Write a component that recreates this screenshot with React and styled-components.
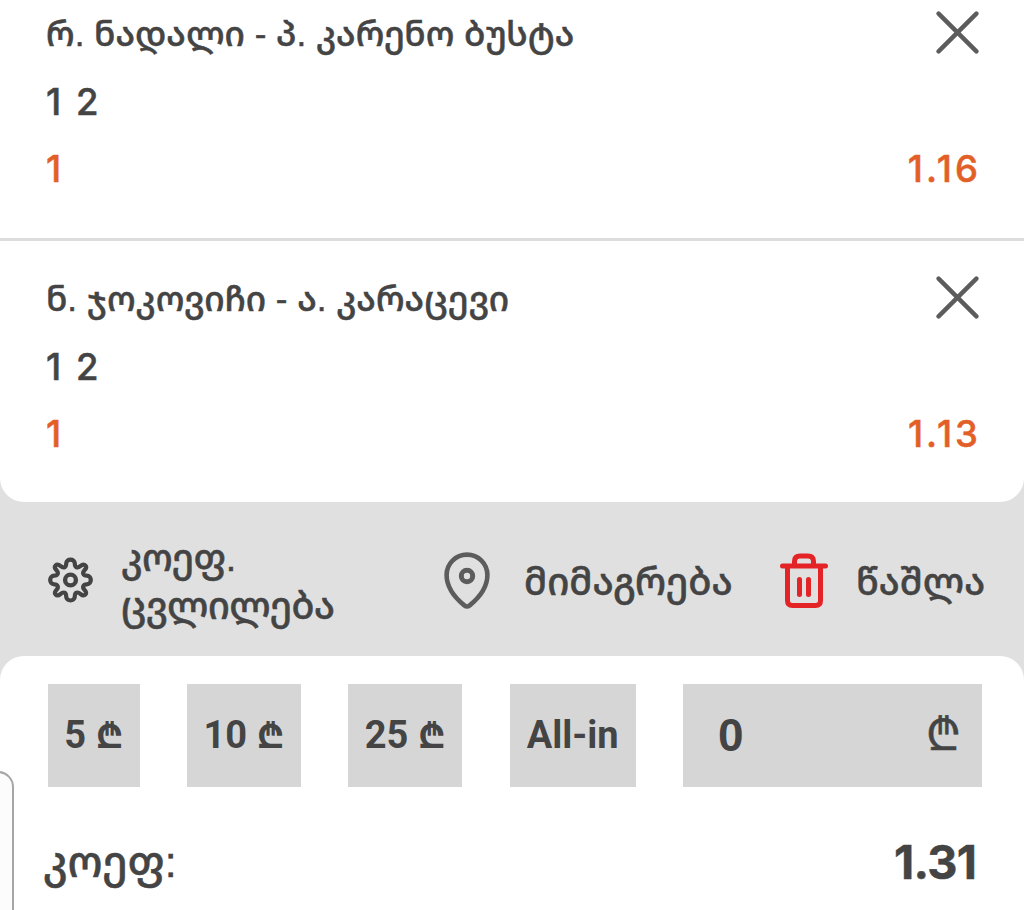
import React, { useState } from 'react';
import styled, { createGlobalStyle, ThemeProvider } from 'styled-components';

const theme = {
  text: '#444444',
  icon: '#5c5c5c',
  accent: '#e35f28',
  danger: '#e32326',
  bar: '#e0e0e0',
  field: '#d6d6d6',
  line: '#dddddd',
};

const GlobalStyle = createGlobalStyle`
  * { box-sizing: border-box; }
  body {
    margin: 0;
    background: ${theme.bar};
    color: ${theme.text};
    font-family: "Liberation Sans", "Noto Sans Georgian", "DejaVu Sans", sans-serif;
    overflow: hidden;
  }
  button, input {
    border: 0;
    padding: 0;
    background: none;
    color: inherit;
    font: inherit;
  }
`;

const Slip = styled.main`
  width: 1024px;
  height: 910px;
  display: flex;
  flex-direction: column;
  overflow: hidden;
`;

const Picks = styled.section`
  height: 502px;
  background: #fff;
  border-radius: 0 0 24px 24px;
`;

const Pick = styled.article`
  height: ${(props) => (props.$first ? 241 : 261)}px;
  padding: ${(props) => (props.$first ? 0 : 24)}px 45px 0 46px;
  border-bottom: ${(props) => (props.$first ? `3px solid ${props.theme.line}` : '0')};
`;

const Line = styled.div`
  height: 67.5px;
  display: flex;
  align-items: center;
  justify-content: space-between;
  color: ${(props) => (props.$accent ? props.theme.accent : 'inherit')};
`;

const Text = styled.span`
  font-size: ${(props) => props.$size || 35}px;
  letter-spacing: ${(props) => props.$spacing || 0}px;
  line-height: 48px;
  font-weight: 500;
  white-space: nowrap;
  -webkit-text-stroke: 0.5px currentColor;
`;

const Figure = styled(Text)`
  padding-top: 1px;
  margin-right: ${(props) => -(props.$spacing || 0) + 1}px;
  font-family: Inter, sans-serif;
  font-weight: ${(props) => (props.$bold ? 700 : 500)};
`;

const CloseButton = styled.button`
  display: flex;
  margin-bottom: 2px;
`;

const Actions = styled.nav`
  height: 153.5px;
  display: grid;
  grid-template-columns: 396px 336px 1fr;
  align-items: center;
  padding: 3px 0 0 48px;
`;

const Action = styled.button`
  display: flex;
  align-items: center;
  gap: ${(props) => props.$gap}px;
  text-align: left;
`;

const ActionLabel = styled(Text)`
  padding-top: 4px;
`;

const Stake = styled.section`
  flex: 1;
  position: relative;
  padding: 28.5px 42px 0 48px;
  background: #fff;
  border-radius: 24px 24px 0 0;
`;

const Amounts = styled.div`
  height: 102.5px;
  display: grid;
  grid-template-columns: 92px 113.5px 114px 126px 299px;
  column-gap: 47.4px;
`;

const Chip = styled.button`
  background: ${(props) => props.theme.field};
  font: 700 38px/100px Roboto, sans-serif;
  white-space: nowrap;
`;

const ChipSign = styled.span`
  font-family: Inter, sans-serif;
  font-size: 37px;
`;

const Field = styled.label`
  display: flex;
  align-items: center;
  justify-content: space-between;
  padding: 0 21px 0 35px;
  background: ${(props) => props.theme.field};
  font-size: 46px;
`;

const AmountInput = styled.input`
  width: 120px;
  font-weight: 700;
  outline: 0;
`;

const FieldSign = styled.span`
  font: 400 45px/48px "DejaVu Sans Condensed", "DejaVu Sans", sans-serif;
  -webkit-text-stroke: 0.5px currentColor;
`;

const Total = styled.div`
  height: 80px;
  margin: 35px 4px 0 -5px;
  display: flex;
  align-items: center;
  justify-content: space-between;
`;

// edge of the side sheet resting over the slip
const SideSheet = styled.aside`
  position: absolute;
  left: -30px;
  bottom: -20px;
  width: 44px;
  height: 159px;
  background: #fcfcfc;
  border: 2px solid #a6a6a6;
  border-radius: 16px;
`;

const CloseIcon = () => (
  <svg width="43" height="43" viewBox="0 0 43 43" fill="none" stroke={theme.icon} strokeWidth="4.4" strokeLinecap="round">
    <path d="M2.6 2.6 40.4 40.4M40.4 2.6 2.6 40.4" />
  </svg>
);

const GearIcon = () => (
  <svg width="45" height="46" viewBox="0 0 45 46" fill="none" stroke={theme.text} strokeWidth="4.2" strokeLinejoin="round">
    <path d="M18.2 6.5C18.2 1.2 26.8 1.2 26.8 6.5C26.8 10.5 29.5 11.6 32.3 9.2C36.5 5.5 40.3 9.3 36.4 13.3C34 16 35.2 18.7 38.7 18.7C44.200 18.7 44.200 27.3 38.7 27.3C35.2 27.3 34 30 36.4 32.7C40.3 36.7 36.5 40.5 32.3 36.8C29.5 34.4 26.8 35.5 26.8 39.5C26.8 44.8 18.2 44.8 18.2 39.5C18.2 35.5 15.5 34.4 12.7 36.8C8.5 40.5 4.7 36.7 8.600 32.7C11 30 9.800 27.3 6.300 27.3C.8 27.3 .8 18.7 6.300 18.7C9.800 18.7 11 16 8.600 13.3C4.700 9.300 8.500 5.500 12.7 9.200C15.500 11.600 18.2 10.500 18.2 6.500Z" />
    <circle cx="22.5" cy="23" r="5.4" strokeWidth="4.4" />
  </svg>
);

const PinIcon = () => (
  <svg width="46" height="57" viewBox="0 0 46 57" fill="none" stroke={theme.icon} strokeWidth="4.6" strokeLinejoin="round">
    <path d="M23 2.6C11.6 2.6 2.6 11.6 2.6 23C2.6 36.5 12.5 47 20.3 53.4Q23 55.6 25.7 53.4C33.5 47 43.4 36.5 43.4 23C43.4 11.6 34.4 2.6 23 2.6Z" />
    <circle cx="23" cy="24" r="5.7" strokeWidth="5" />
  </svg>
);

const TrashIcon = () => (
  <svg width="48" height="57" viewBox="0 0 48 57" fill="none" stroke={theme.danger} strokeWidth="5" strokeLinecap="round" strokeLinejoin="round">
    <path d="M2.5 14H45.5M7.5 14V48.500Q7.5 53.500 12.5 53.500H35.5Q40.5 53.500 40.5 48.500V14M14.5 13V9.500Q14.5 4 20 4H28Q33.5 4 33.5 9.500V13M19.5 27.500V42.500M28.5 27.500V42.500" />
  </svg>
);

const picks = [
  { match: 'რ. ნადალი - პ. კარენო ბუსტა', odds: '1.16' },
  { match: 'ნ. ჯოკოვიჩი - ა. კარაცევი', odds: '1.13' },
];

const amounts = [5, 10, 25];

const App = () => {
  const [amount, setAmount] = useState('0');
  return (
    <ThemeProvider theme={theme}>
      <GlobalStyle />
      <Slip>
        <Picks>
          {picks.map((pick, i) => (
            <Pick key={pick.match} $first={i === 0}>
              <Line>
                <Text>{pick.match}</Text>
                <CloseButton aria-label="Close"><CloseIcon /></CloseButton>
              </Line>
              <Line><Figure $size={36.5} $spacing={2.5}>1 2</Figure></Line>
              <Line $accent>
                <Figure $size={36.5}>1</Figure>
                <Figure $size={36.5} $spacing={3}>{pick.odds}</Figure>
              </Line>
            </Pick>
          ))}
        </Picks>
        <Actions>
          <Action $gap={28}>
            <GearIcon />
            <ActionLabel $size={37.5} $spacing={-0.5}>კოეფ.<br />ცვლილება</ActionLabel>
          </Action>
          <Action $gap={34}>
            <PinIcon />
            <ActionLabel $size={38}>მიმაგრება</ActionLabel>
          </Action>
          <Action $gap={28}>
            <TrashIcon />
            <ActionLabel $size={37.5}>წაშლა</ActionLabel>
          </Action>
        </Actions>
        <Stake>
          <Amounts>
            {amounts.map((value) => (
              <Chip key={value} onClick={() => setAmount(String(value))}>
                {value} <ChipSign>₾</ChipSign>
              </Chip>
            ))}
            <Chip>All-in</Chip>
            <Field>
              <AmountInput value={amount} onChange={(e) => setAmount(e.target.value)} />
              <FieldSign>₾</FieldSign>
            </Field>
          </Amounts>
          <Total>
            <Text $size={42.8}>კოეფ:</Text>
            <Figure $bold $size={46.8} $spacing={-0.7}>1.31</Figure>
          </Total>
          <SideSheet />
        </Stake>
      </Slip>
    </ThemeProvider>
  );
};

export default App;
